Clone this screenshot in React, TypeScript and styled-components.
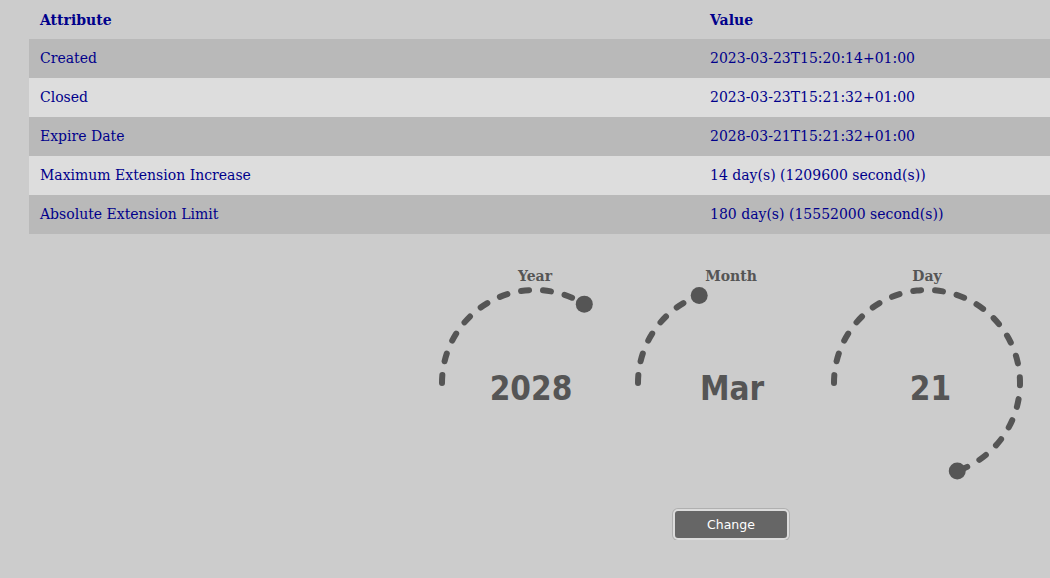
import React from "react";
import styled, { createGlobalStyle } from "styled-components";

const Global = createGlobalStyle`
  html, body { margin: 0; padding: 0; background: #cccccc; overflow: hidden; }
  body { font-family: "DejaVu Serif", serif; }
`;

const Page = styled.div`
  padding-left: 29px;
  width: 1050px;
  box-sizing: border-box;
`;

const Table = styled.div`
  display: grid;
  grid-template-columns: 670px 1fr;
  color: #00008b;
  font-size: 14px;
`;

const Row = styled.div<{ $tone: "head" | "dark" | "light" }>`
  display: contents;
  & > div {
    height: 39px;
    padding-bottom: ${(p) => (p.$tone === "head" ? 0 : 1)}px;
    background: ${(p) =>
      p.$tone === "dark" ? "#b9b9b9" : p.$tone === "light" ? "#dddddd" : "transparent"};
    font-weight: ${(p) => (p.$tone === "head" ? "bold" : "normal")};
  }
`;

const Cell = styled.div`
  display: flex;
  align-items: center;
  padding-left: 11px;
  box-sizing: border-box;
  white-space: nowrap;
`;

const Controls = styled.div`
  margin-left: auto;
  margin-right: 25px;
  margin-top: 27px;
  width: 588px;
  display: flex;
  flex-direction: column;
  align-items: center;
`;

const Gauges = styled.div`
  display: flex;
  width: 100%;
`;

const GaugeSvg = styled.svg`
  display: block;
  width: 196px;
  height: 230px;
  overflow: visible;
`;

const Label = styled.text`
  font-family: "DejaVu Serif", serif;
  font-weight: bold;
  font-size: 14px;
  fill: #555555;
`;

const Value = styled.text`
  font-family: "DejaVu Sans Condensed", "DejaVu Sans", sans-serif;
  font-stretch: condensed;
  font-weight: bold;
  font-size: 33px;
  fill: #555555;
`;

const Button = styled.button`
  margin-top: 18px;
  width: 116px;
  height: 31px;
  background: #666666;
  border: 2px solid #dcdcdc;
  border-radius: 5px;
  box-shadow: 0 0 0 1px #b0b0b0;
  color: #ffffff;
  font-family: "DejaVu Sans", sans-serif;
  font-size: 12.5px;
  padding: 0;
`;

const rows = [
  ["Created", "2023-03-23T15:20:14+01:00"],
  ["Closed", "2023-03-23T15:21:32+01:00"],
  ["Expire Date", "2028-03-21T15:21:32+01:00"],
  ["Maximum Extension Increase", "14 day(s) (1209600 second(s))"],
  ["Absolute Extension Limit", "180 day(s) (15552000 second(s))"],
];

function Gauge({
  label,
  value,
  sweep,
  shift,
}: {
  label: string;
  value: string;
  sweep: number;
  shift: number;
}) {
  const cx = 98;
  const cy = 122;
  const r = 93;
  const rad = (sweep * Math.PI) / 180;
  const ex = cx - r * Math.cos(rad);
  const ey = cy - r * Math.sin(rad);
  const large = sweep > 180 ? 1 : 0;
  const d = `M ${cx - r} ${cy} A ${r} ${r} 0 ${large} 1 ${ex} ${ey}`;
  return (
    <GaugeSvg viewBox="0 0 196 230">
      <Label x={cx} y={20} textAnchor="middle">
        {label}
      </Label>
      <path
        d={d}
        fill="none"
        stroke="#555555"
        strokeWidth={6}
        strokeLinecap="round"
        strokeDasharray="8 14"
      />
      <circle cx={ex} cy={ey} r={8.5} fill="#555555" />
      <Value x={cx + shift} y={139} textAnchor="middle">
        {value}
      </Value>
    </GaugeSvg>
  );
}

export default function App() {
  return (
    <Page>
      <Global />
      <Table>
        <Row $tone="head">
          <Cell>Attribute</Cell>
          <Cell>Value</Cell>
        </Row>
        {rows.map(([a, v], i) => (
          <Row key={a} $tone={i % 2 === 0 ? "dark" : "light"}>
            <Cell>{a}</Cell>
            <Cell>{v}</Cell>
          </Row>
        ))}
      </Table>
      <Controls>
        <Gauges>
          <Gauge label="Year" value="2028" sweep={122} shift={-4} />
          <Gauge label="Month" value="Mar" sweep={70} shift={1} />
          <Gauge label="Day" value="21" sweep={251} shift={3.5} />
        </Gauges>
        <Button>Change</Button>
      </Controls>
    </Page>
  );
}
